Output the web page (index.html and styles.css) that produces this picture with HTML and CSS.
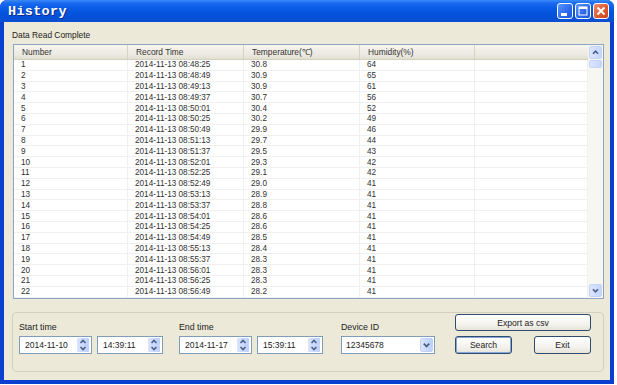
FILE: index.html
```html
<!DOCTYPE html>
<html>
<head>
<meta charset="utf-8">
<link rel="stylesheet" href="styles.css">
</head>
<body>
<div class="window">
  <div class="titlebar">
    <span class="title">History</span>
    <div class="caption-buttons">
      <span class="cap cap-min"><svg width="16" height="16" viewBox="0 0 16 16"><rect x="4" y="10" width="6" height="3" fill="#fff"/></svg></span>
      <span class="cap cap-max"><svg width="16" height="16" viewBox="0 0 16 16"><rect x="4" y="4" width="8" height="8" fill="none" stroke="#fff" stroke-width="1"/><rect x="4" y="4" width="8" height="2" fill="#fff"/></svg></span>
      <span class="cap cap-close"><svg width="16" height="16" viewBox="0 0 16 16"><path d="M4.5 4.5 L11.5 11.5 M11.5 4.5 L4.5 11.5" stroke="#fff" stroke-width="2"/></svg></span>
    </div>
  </div>
  <div class="frame">
    <div class="status">Data Read Complete</div>
    <div class="listview">
      <div class="list-area">
        <table class="grid">
          <colgroup>
            <col class="c1"><col class="c2"><col class="c3"><col class="c4"><col class="c5">
          </colgroup>
          <thead>
            <tr><th>Number</th><th>Record Time</th><th>Temperature(℃)</th><th>Humidity(%)</th><th class="last"></th></tr>
          </thead>
          <tbody>
            <tr><td>1</td><td>2014-11-13 08:48:25</td><td>30.8</td><td>64</td><td></td></tr>
            <tr><td>2</td><td>2014-11-13 08:48:49</td><td>30.9</td><td>65</td><td></td></tr>
            <tr><td>3</td><td>2014-11-13 08:49:13</td><td>30.9</td><td>61</td><td></td></tr>
            <tr><td>4</td><td>2014-11-13 08:49:37</td><td>30.7</td><td>56</td><td></td></tr>
            <tr><td>5</td><td>2014-11-13 08:50:01</td><td>30.4</td><td>52</td><td></td></tr>
            <tr><td>6</td><td>2014-11-13 08:50:25</td><td>30.2</td><td>49</td><td></td></tr>
            <tr><td>7</td><td>2014-11-13 08:50:49</td><td>29.9</td><td>46</td><td></td></tr>
            <tr><td>8</td><td>2014-11-13 08:51:13</td><td>29.7</td><td>44</td><td></td></tr>
            <tr><td>9</td><td>2014-11-13 08:51:37</td><td>29.5</td><td>43</td><td></td></tr>
            <tr><td>10</td><td>2014-11-13 08:52:01</td><td>29.3</td><td>42</td><td></td></tr>
            <tr><td>11</td><td>2014-11-13 08:52:25</td><td>29.1</td><td>42</td><td></td></tr>
            <tr><td>12</td><td>2014-11-13 08:52:49</td><td>29.0</td><td>41</td><td></td></tr>
            <tr><td>13</td><td>2014-11-13 08:53:13</td><td>28.9</td><td>41</td><td></td></tr>
            <tr><td>14</td><td>2014-11-13 08:53:37</td><td>28.8</td><td>41</td><td></td></tr>
            <tr><td>15</td><td>2014-11-13 08:54:01</td><td>28.6</td><td>41</td><td></td></tr>
            <tr><td>16</td><td>2014-11-13 08:54:25</td><td>28.6</td><td>41</td><td></td></tr>
            <tr><td>17</td><td>2014-11-13 08:54:49</td><td>28.5</td><td>41</td><td></td></tr>
            <tr><td>18</td><td>2014-11-13 08:55:13</td><td>28.4</td><td>41</td><td></td></tr>
            <tr><td>19</td><td>2014-11-13 08:55:37</td><td>28.3</td><td>41</td><td></td></tr>
            <tr><td>20</td><td>2014-11-13 08:56:01</td><td>28.3</td><td>41</td><td></td></tr>
            <tr><td>21</td><td>2014-11-13 08:56:25</td><td>28.3</td><td>41</td><td></td></tr>
            <tr><td>22</td><td>2014-11-13 08:56:49</td><td>28.2</td><td>41</td><td></td></tr>
          </tbody>
        </table>
      </div>
      <div class="vscroll">
        <span class="sbtn"><svg width="13" height="13" viewBox="0 0 13 13"><path d="M3.5 8 L6.5 5 L9.5 8" fill="none" stroke="#4D6185" stroke-width="2"/></svg></span>
        <span class="thumb"></span>
        <span class="track"></span>
        <span class="sbtn"><svg width="13" height="13" viewBox="0 0 13 13"><path d="M3.5 5 L6.5 8 L9.5 5" fill="none" stroke="#4D6185" stroke-width="2"/></svg></span>
      </div>
    </div>
    <div class="groupbox">
      <div class="field">
        <div class="label">Start time</div>
        <div class="inputs">
          <div class="input w-date"><span class="val">2014-11-10</span><span class="spin"><span class="sp"><svg width="10" height="7" viewBox="0 0 10 7"><path d="M2.5 5 L5 2.5 L7.5 5" fill="none" stroke="#4D6185" stroke-width="1.6"/></svg></span><span class="sp"><svg width="10" height="7" viewBox="0 0 10 7"><path d="M2.5 2 L5 4.5 L7.5 2" fill="none" stroke="#4D6185" stroke-width="1.6"/></svg></span></span></div>
          <div class="input w-time"><span class="val">14:39:11</span><span class="spin"><span class="sp"><svg width="10" height="7" viewBox="0 0 10 7"><path d="M2.5 5 L5 2.5 L7.5 5" fill="none" stroke="#4D6185" stroke-width="1.6"/></svg></span><span class="sp"><svg width="10" height="7" viewBox="0 0 10 7"><path d="M2.5 2 L5 4.5 L7.5 2" fill="none" stroke="#4D6185" stroke-width="1.6"/></svg></span></span></div>
        </div>
      </div>
      <div class="field">
        <div class="label">End time</div>
        <div class="inputs">
          <div class="input w-date"><span class="val">2014-11-17</span><span class="spin"><span class="sp"><svg width="10" height="7" viewBox="0 0 10 7"><path d="M2.5 5 L5 2.5 L7.5 5" fill="none" stroke="#4D6185" stroke-width="1.6"/></svg></span><span class="sp"><svg width="10" height="7" viewBox="0 0 10 7"><path d="M2.5 2 L5 4.5 L7.5 2" fill="none" stroke="#4D6185" stroke-width="1.6"/></svg></span></span></div>
          <div class="input w-time"><span class="val">15:39:11</span><span class="spin"><span class="sp"><svg width="10" height="7" viewBox="0 0 10 7"><path d="M2.5 5 L5 2.5 L7.5 5" fill="none" stroke="#4D6185" stroke-width="1.6"/></svg></span><span class="sp"><svg width="10" height="7" viewBox="0 0 10 7"><path d="M2.5 2 L5 4.5 L7.5 2" fill="none" stroke="#4D6185" stroke-width="1.6"/></svg></span></span></div>
        </div>
      </div>
      <div class="field field-dev">
        <div class="label">Device ID</div>
        <div class="inputs">
          <div class="input w-combo"><span class="val">12345678</span><span class="drop"><svg width="12" height="14" viewBox="0 0 12 14"><path d="M3 5.5 L6 8.5 L9 5.5" fill="none" stroke="#4D6185" stroke-width="2"/></svg></span></div>
        </div>
      </div>
      <div class="actions">
        <button class="btn btn-wide">Export as csv</button>
        <div class="btn-row">
          <button class="btn btn-def">Search</button>
          <button class="btn">Exit</button>
        </div>
      </div>
    </div>
  </div>
</div>
</body>
</html>
```

FILE: styles.css
```css
html, body {
  margin: 0;
  padding: 0;
  background: #ffffff;
}
body {
  font-family: "Liberation Sans", Arial, sans-serif;
  font-size: 8px;
  color: #2a2a2a;
}
.window {
  width: 614px;
  height: 384px;
  display: flex;
  flex-direction: column;
  border-radius: 7px 7px 0 0;
  overflow: hidden;
  background: #0a3fd0;
}
.titlebar {
  height: 22px;
  flex: none;
  display: flex;
  align-items: center;
  justify-content: space-between;
  background: linear-gradient(#3b8cf6 0, #1a6cf0 3px, #0a5ce8 8px, #0553dc 60%, #0a4fd2 100%);
  padding: 0 5px 0 8px;
}
.title {
  font-family: "Liberation Mono", "DejaVu Sans Mono", monospace;
  font-weight: bold;
  font-size: 13.5px;
  color: #ffffff;
  text-shadow: 1px 1px 0 #0b2b8a;
  letter-spacing: 0.3px;
}
.caption-buttons {
  display: flex;
  gap: 2px;
}
.cap {
  width: 16px;
  height: 16px;
  box-sizing: border-box;
  border: 1px solid #ffffff;
  border-radius: 3px;
  display: flex;
  align-items: center;
  justify-content: center;
  background: linear-gradient(135deg, #5a97ff, #2a68ea 60%, #1d56d8);
}
.cap svg { display: block; margin: -1px; }
.cap-close {
  background: linear-gradient(135deg, #ec8a6a, #e05a30 55%, #cc4418);
}
.frame {
  flex: 1;
  display: flex;
  flex-direction: column;
  background: #ece9d8;
  margin: 0 4px 4px 4px;
  padding: 7px 6px 0 9px;
}
.status {
  height: 12px;
  line-height: 12px;
  font-size: 8.4px;
  margin-left: -1px;
  color: #222;
}
.listview {
  margin-top: 3px;
  height: 255px;
  box-sizing: border-box;
  border: 1px solid #8ea4c4;
  background: #ffffff;
  display: flex;
}
.list-area {
  flex: 1;
  overflow: hidden;
}
.grid {
  border-collapse: separate;
  border-spacing: 0;
  table-layout: fixed;
  width: 574px;
}
.c1 { width: 114px; }
.c2 { width: 116px; }
.c3 { width: 116px; }
.c4 { width: 115px; }
.c5 { width: 113px; }
.grid thead tr { height: 15px; }
.grid th {
  height: 14px;
  padding: 0 0 0 8px;
  text-align: left;
  font-weight: normal;
  font-size: 8.4px;
  line-height: 12px;
  color: #333;
  background: linear-gradient(#f6f5ef, #ebe9e0 70%, #e2dfd2);
  border-bottom: 1px solid #d2cfbf;
  box-shadow: inset -1px 0 0 #d6d3c6;
  white-space: nowrap;
  overflow: hidden;
}
.grid th.last { box-shadow: none; }
.grid tbody tr { height: 10.8px; }
.grid td {
  padding: 0 0 0 7px;
  font-size: 8.2px;
  line-height: 9px;
  color: #303030;
  border-right: 1px solid #f0f0f0;
  border-bottom: 1px solid #f0f0f0;
  white-space: nowrap;
  overflow: hidden;
}
.vscroll {
  width: 15px;
  flex: none;
  display: flex;
  flex-direction: column;
  background: #f7f7f2;
  padding: 0 1px 0 1px;
  box-sizing: border-box;
}
.sbtn, .thumb {
  box-sizing: border-box;
  border: 1px solid #c4d2f4;
  border-radius: 2px;
  background: linear-gradient(90deg, #dbe5fd, #c6d6fb);
  display: flex;
  align-items: center;
  justify-content: center;
}
.sbtn { height: 13px; margin-top: 1px; }
.sbtn:last-child { margin-bottom: 1px; }
.thumb { height: 8px; margin-top: 1px; }
.track { flex: 1; }
.groupbox {
  margin: 13px 0 0 -1px;
  height: 60px;
  box-sizing: border-box;
  border: 1px solid #d3d0c0;
  border-radius: 4px;
  display: flex;
  padding: 1px 0 0 6px;
}
.field {
  display: flex;
  flex-direction: column;
  margin-top: 7px;
  margin-right: 16px;
}
.field-dev { margin-right: 20px; margin-left: 2px; }
.label {
  height: 13px;
  line-height: 13px;
  font-size: 8.8px;
  color: #222;
}
.inputs {
  margin-top: 2px;
  display: flex;
  gap: 5px;
}
.input {
  height: 18px;
  box-sizing: border-box;
  border: 1px solid #7f9db9;
  background: #fff;
  display: flex;
  align-items: center;
  justify-content: space-between;
  padding: 0 1px 0 5px;
  font-size: 8.5px;
  color: #222;
}
.w-date { width: 73px; }
.w-time { width: 66px; }
.w-combo { width: 94px; padding-left: 4px; }
.spin {
  width: 12px;
  height: 14px;
  display: flex;
  flex-direction: column;
  justify-content: space-between;
  margin-right: 1px;
}
.sp {
  height: 7px;
  box-sizing: border-box;
  border-radius: 1px;
  background: linear-gradient(90deg, #d9e4fd, #bccffa);
  display: flex;
  align-items: center;
  justify-content: center;
}
.sp svg { display: block; }
.drop {
  width: 13px;
  height: 14px;
  box-sizing: border-box;
  border: 1px solid #c0d0f6;
  border-radius: 2px;
  background: linear-gradient(90deg, #dce6fd, #bcd0fb);
  display: flex;
  align-items: center;
  justify-content: center;
}
.drop svg { display: block; }
.actions {
  display: flex;
  flex-direction: column;
  gap: 5px;
  width: 136px;
}
.btn {
  font-family: "Liberation Sans", Arial, sans-serif;
  font-size: 8.6px;
  color: #222;
  height: 18px;
  box-sizing: border-box;
  border: 1px solid #2d4c6e;
  border-radius: 3px;
  background: linear-gradient(#ffffff, #f4f3ee 60%, #e6e3da);
  padding: 0;
  margin: 0;
  width: 57px;
}
.btn-wide { width: 136px; height: 17px; }
.btn-row {
  display: flex;
  justify-content: space-between;
}
.btn-def {
  box-shadow: inset 0 0 0 1px #8aa6d8;
}
```
